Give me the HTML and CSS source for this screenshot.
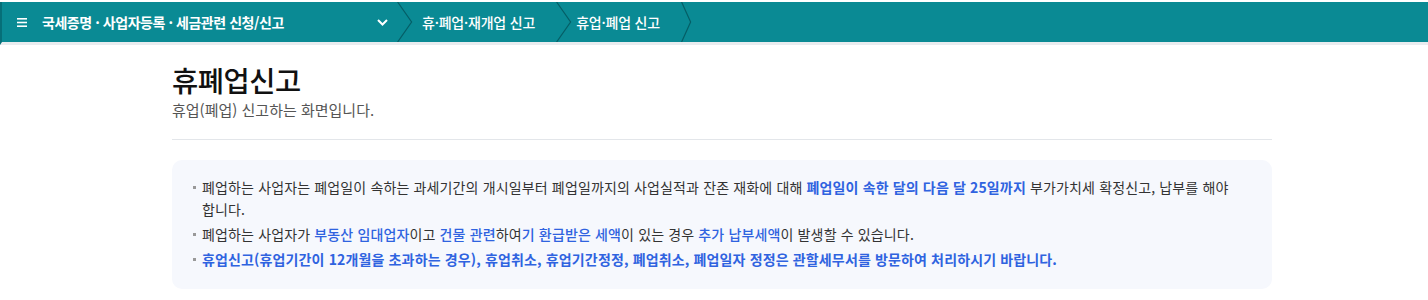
FILE: index.html
```html
<!DOCTYPE html>
<html lang="ko">
<head>
    <meta charset="UTF-8">
    <title>휴폐업신고</title>
    <link rel="stylesheet" href="styles.css">
</head>
<body>
    <nav class="topbar">
        <div class="menu">
            <span class="burger">
                <svg width="10" height="9" viewBox="0 0 10 9"><rect y="0" width="10" height="1.6" fill="#fff"/><rect y="3.7" width="10" height="1.6" fill="#fff"/><rect y="7.4" width="10" height="1.6" fill="#fff"/></svg>
            </span>
            <span class="menu-title">국세증명 · 사업자등록 · 세금관련 신청/신고</span>
            <svg class="caret" width="11" height="7" viewBox="0 0 11 7"><path d="M1 1l4.5 4.5L10 1" fill="none" stroke="#fff" stroke-width="2"/></svg>
        </div>
        <div class="crumb first">휴·폐업·재개업 신고</div>
        <div class="crumb">휴업·폐업 신고</div>
        <div class="crumb-end"></div>
    </nav>

    <main class="page">
        <header class="page-head">
            <h1>휴폐업신고</h1>
            <p>휴업(폐업) 신고하는 화면입니다.</p>
        </header>

        <section class="notice">
            <ul>
                <li>폐업하는 사업자는 폐업일이 속하는 과세기간의 개시일부터 폐업일까지의 사업실적과 잔존 재화에 대해 <b class="hl">폐업일이 속한 달의 다음 달 25일까지</b> 부가가치세 확정신고, 납부를 해야 합니다.</li>
                <li>폐업하는 사업자가 <span class="hl">부동산 임대업자</span>이고 <span class="hl">건물 관련</span>하여<span class="hl">기 환급받은 세액</span>이 있는 경우 <span class="hl">추가 납부세액</span>이 발생할 수 있습니다.</li>
                <li class="strong">휴업신고(휴업기간이 12개월을 초과하는 경우), 휴업취소, 휴업기간정정, 폐업취소, 폐업일자 정정은 관할세무서를 방문하여 처리하시기 바랍니다.</li>
            </ul>
        </section>
    </main>
</body>
</html>
```

FILE: styles.css
```css
body {
    margin: 0;
    background: #fff;
    font-family: "Noto Sans CJK KR", "Noto Sans", sans-serif;
    color: #222;
}

.topbar {
    display: flex;
    height: 40px;
    margin-top: 2px;
    background: #0a8a94;
    border-left: 2px solid #066f78;
    border-bottom: 3px solid #e9ecef;
}

.menu {
    display: flex;
    align-items: center;
    width: 380px;
    padding-left: 15px;
    color: #fff;
    font-size: 14px;
    font-weight: 700;
    letter-spacing: -0.45px;
}

.burger {
    display: flex;
    margin-right: 15px;
}

.menu-title {
    flex: 1;
}

.caret {
    margin-right: 9px;
}

.crumb {
    display: flex;
    align-items: center;
    padding: 0 21px 0 20px;
    color: #fff;
    font-size: 14px;
    font-weight: 500;
    letter-spacing: -0.2px;
    background:
        url("data:image/svg+xml,%3Csvg xmlns='http://www.w3.org/2000/svg' width='16' height='40'%3E%3Cpath d='M0.6 0l14 20L0.6 40' fill='none' stroke='%23055e66' stroke-width='1.2'/%3E%3C/svg%3E") left center no-repeat;
}

.crumb.first {
    padding-left: 25px;
}

.crumb-end {
    width: 16px;
    background:
        url("data:image/svg+xml,%3Csvg xmlns='http://www.w3.org/2000/svg' width='16' height='40'%3E%3Cpath d='M0.6 0l9 20L0.6 40' fill='none' stroke='%23055e66' stroke-width='1.2'/%3E%3C/svg%3E") left center no-repeat;
}

.page {
    width: 1100px;
    margin-left: 172px;
    padding-top: 17px;
}

.page-head {
    padding-bottom: 19px;
    border-bottom: 1px solid #e3e6ea;
}

.page-head h1 {
    margin: 0;
    font-size: 28.5px;
    font-weight: 500;
    line-height: 36px;
    color: #111;
    letter-spacing: -0.5px;
}

.page-head p {
    margin: 2px 0 0;
    font-size: 15px;
    line-height: 20px;
    color: #555;
}

.notice {
    margin-top: 20px;
    padding: 16px 20px 19px 20px;
    background: #f6f8fd;
    border-radius: 10px;
}

.notice ul {
    margin: 0;
    padding: 0;
    list-style: none;
}

.notice li {
    position: relative;
    padding-left: 10px;
    margin-bottom: 3px;
    font-size: 14px;
    line-height: 22px;
    color: #333;
    letter-spacing: 0.14px;
    word-break: keep-all;
}

.notice li:last-child {
    margin-bottom: 0;
}

.notice li::before {
    content: "";
    position: absolute;
    left: 1px;
    top: 10px;
    width: 3px;
    height: 3px;
    background: #999;
}

.hl {
    color: #2f63e0;
    font-weight: 500;
}

b.hl {
    font-weight: 700;
}

.notice li.strong {
    color: #2f63e0;
    font-weight: 700;
}
```
